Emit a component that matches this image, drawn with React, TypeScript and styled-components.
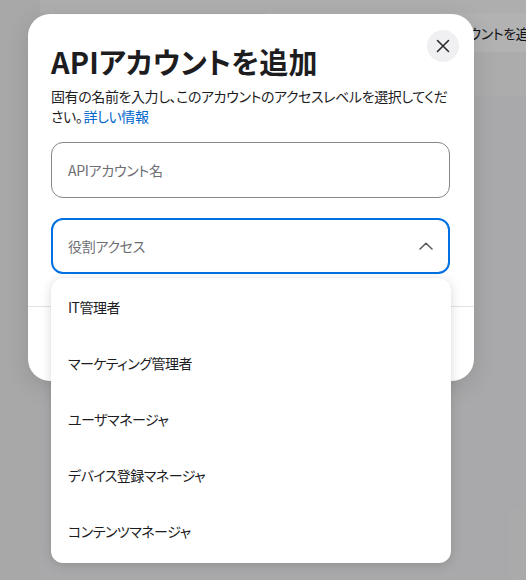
import React from "react";
import styled, { createGlobalStyle } from "styled-components";

const GlobalStyle = createGlobalStyle`
  html, body {
    margin: 0;
    padding: 0;
  }
  body {
    font-family: "Noto Sans CJK JP", "Noto Sans", sans-serif;
    color: #1d1d1f;
  }
`;

const roles = [
  "IT管理者",
  "マーケティング管理者",
  "ユーザマネージャ",
  "デバイス登録マネージャ",
  "コンテンツマネージャ",
];

// page behind the dialog
const Stage = styled.div`
  position: relative;
  width: 526px;
  height: 580px;
  overflow: hidden;
  display: flex;
  background: #f3f3f5;
`;

const Sidebar = styled.aside`
  width: 40px;
  background: #f1f1f3;
`;

const MainColumn = styled.main`
  flex: 1;
  display: flex;
  flex-direction: column;
`;

const TopStrip = styled.div`
  height: 13px;
  background: #f9f9fa;
`;

const ContentArea = styled.div`
  flex: 1;
  display: flex;
  justify-content: flex-end;
  align-items: flex-start;
`;

const ActionPanel = styled.section`
  width: 286px;
  margin-right: -20px;
  border-radius: 10px 0 0 0;
  background: #ffffff;
  display: flex;
  flex-direction: column;
  overflow: hidden;
`;

const PanelRow = styled.div<{ $tone?: string }>`
  height: ${(p) => (p.$tone ? "44px" : "39px")};
  background: ${(p) => p.$tone || "#ffffff"};
  padding-left: 163px;
  display: flex;
  align-items: center;
  font-size: 14px;
  letter-spacing: -0.4px;
  font-feature-settings: "palt";
  white-space: nowrap;
  color: #1d1d1f;
`;

const Scrim = styled.div`
  position: absolute;
  inset: 0;
  background: rgba(0, 0, 0, 0.3);
`;

// dialog
const Modal = styled.div`
  position: absolute;
  left: 28px;
  top: 14px;
  width: 446px;
  height: 367px;
  border-radius: 22px;
  background: #ffffff;
  box-shadow: 0 6px 24px rgba(0, 0, 0, 0.12);
  display: flex;
  flex-direction: column;
`;

const CloseButton = styled.button`
  position: absolute;
  top: 16px;
  right: 15px;
  width: 32px;
  height: 32px;
  border: 0;
  border-radius: 50%;
  background: #f0f0f2;
  display: flex;
  align-items: center;
  justify-content: center;
  padding: 0;
  cursor: pointer;
`;

const ModalBody = styled.div`
  padding: 29px 24px 32px 23px;
  display: flex;
  flex-direction: column;
`;

const Title = styled.h1`
  margin: 0;
  font-size: 29px;
  line-height: 36px;
  font-weight: 700;
  letter-spacing: 0.1px;
  font-feature-settings: "palt";
  color: #1d1d1f;
`;

const Description = styled.p`
  margin: 7px 0 0;
  font-size: 14px;
  line-height: 20px;
  letter-spacing: -0.4px;
  font-feature-settings: "palt";
  color: #1d1d1f;
`;

const Link = styled.a`
  margin-left: 1px;
  color: #0066cc;
  text-decoration: none;
`;

const Field = styled.div<{ $active?: boolean }>`
  position: relative;
  box-sizing: border-box;
  height: 56px;
  margin-top: ${(p) => (p.$active ? "20px" : "16px")};
  border: ${(p) => (p.$active ? "2px solid #0071e3" : "1px solid #86868b")};
  border-radius: 12px;
  padding: 0 ${(p) => (p.$active ? "15px" : "16px")};
  display: flex;
  align-items: center;
  justify-content: space-between;
`;

const Placeholder = styled.span`
  font-size: 14px;
  letter-spacing: -0.3px;
  font-feature-settings: "palt";
  color: #6e6e73;
`;

const Footer = styled.div`
  flex: 1;
  border-top: 1px solid #e3e3e6;
`;

// the open role list hangs below the select
const Menu = styled.ul`
  position: absolute;
  left: -2px;
  top: calc(100% + 6px);
  width: 400px;
  margin: 0;
  padding: 1px 0 4px;
  list-style: none;
  background: #ffffff;
  border-radius: 12px;
  box-shadow: 0 2px 12px rgba(0, 0, 0, 0.14), 0 0 1px rgba(0, 0, 0, 0.12);
  z-index: 2;
`;

const MenuItem = styled.li`
  height: 56px;
  padding-left: 17px;
  display: flex;
  align-items: center;
  font-size: 14px;
  letter-spacing: -0.5px;
  font-feature-settings: "palt";
  color: #1d1d1f;
`;

const CloseIcon = () => (
  <svg width="14" height="14" viewBox="0 0 14 14" fill="none">
    <path d="M1.5 1.5l11 11M12.5 1.5l-11 11" stroke="#2b2b2e" strokeWidth="1.6" strokeLinecap="round" />
  </svg>
);

const ChevronUp = () => (
  <svg width="14" height="8" viewBox="0 0 14 8" fill="none">
    <path d="M1 7L7 1.2 13 7" stroke="#58585c" strokeWidth="1.5" strokeLinecap="round" strokeLinejoin="round" />
  </svg>
);

export default function App() {
  return (
    <Stage>
      <GlobalStyle />
      <Sidebar />
      <MainColumn>
        <TopStrip />
        <ContentArea>
          <ActionPanel>
            <PanelRow>APIアカウントを追加</PanelRow>
            <PanelRow $tone="#f6f6f7" />
          </ActionPanel>
        </ContentArea>
      </MainColumn>
      <Scrim />
      <Modal role="dialog">
        <CloseButton aria-label="閉じる">
          <CloseIcon />
        </CloseButton>
        <ModalBody>
          <Title>APIアカウントを追加</Title>
          <Description>
            固有の名前を入力し、このアカウントのアクセスレベルを選択してください。<Link href="#">詳しい情報</Link>
          </Description>
          <Field>
            <Placeholder>APIアカウント名</Placeholder>
          </Field>
          <Field $active>
            <Placeholder>役割アクセス</Placeholder>
            <ChevronUp />
            <Menu>
              {roles.map((r) => (
                <MenuItem key={r}>{r}</MenuItem>
              ))}
            </Menu>
          </Field>
        </ModalBody>
        <Footer />
      </Modal>
    </Stage>
  );
}
